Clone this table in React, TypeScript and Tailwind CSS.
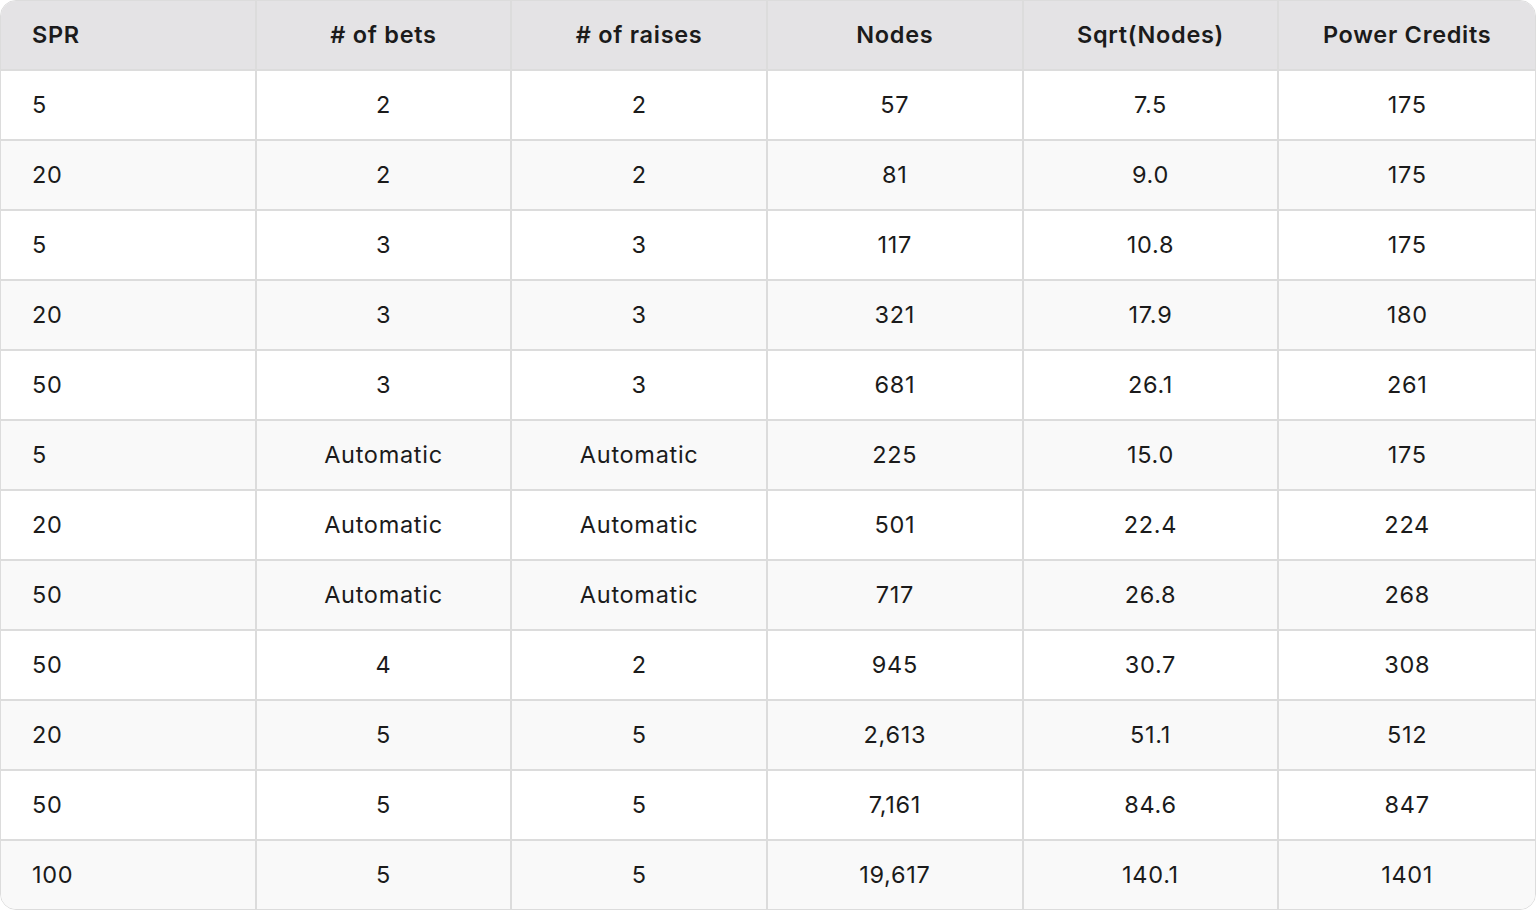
const HEADERS = ["SPR", "# of bets", "# of raises", "Nodes", "Sqrt(Nodes)", "Power Credits"];

const ROWS: string[][] = [
  ["5", "2", "2", "57", "7.5", "175"],
  ["20", "2", "2", "81", "9.0", "175"],
  ["5", "3", "3", "117", "10.8", "175"],
  ["20", "3", "3", "321", "17.9", "180"],
  ["50", "3", "3", "681", "26.1", "261"],
  ["5", "Automatic", "Automatic", "225", "15.0", "175"],
  ["20", "Automatic", "Automatic", "501", "22.4", "224"],
  ["50", "Automatic", "Automatic", "717", "26.8", "268"],
  ["50", "4", "2", "945", "30.7", "308"],
  ["20", "5", "5", "2,613", "51.1", "512"],
  ["50", "5", "5", "7,161", "84.6", "847"],
  ["100", "5", "5", "19,617", "140.1", "1401"],
];

// first column is left aligned, the rest centered; divider on the right side
function cellClass(i: number) {
  const align = i === 0 ? "justify-start pl-[31px]" : "justify-center";
  const divider = i < 5 ? "border-r-2 border-[#dcdcdc]" : "";
  return `flex items-center ${align} ${divider}`;
}

export default function App() {
  return (
    <div
      className="w-[1536px] h-[910px] bg-white text-[#1b1b1b]"
      style={{ fontFamily: "Inter, 'Noto Sans', sans-serif" }}
    >
      <div className="overflow-hidden rounded-[16px] border border-[#dcdcdc]">
        {/* header */}
        <div className="grid h-[68px] grid-cols-6 bg-[#e4e3e5] text-[23.5px] font-semibold tracking-[0.03em]">
          {HEADERS.map((h, i) => (
            <div key={h} className={cellClass(i)}>
              {h}
            </div>
          ))}
        </div>

        {ROWS.map((row, r) => (
          <div
            key={r}
            className={`grid h-[70px] grid-cols-6 border-t-2 border-[#dcdcdc] text-[23.5px] tracking-[0.03em] ${
              r % 2 === 0 ? "bg-white" : "bg-[#f9f9f9]"
            }`}
          >
            {row.map((cell, i) => (
              <div key={i} className={cellClass(i)}>
                {cell}
              </div>
            ))}
          </div>
        ))}
      </div>
    </div>
  );
}
